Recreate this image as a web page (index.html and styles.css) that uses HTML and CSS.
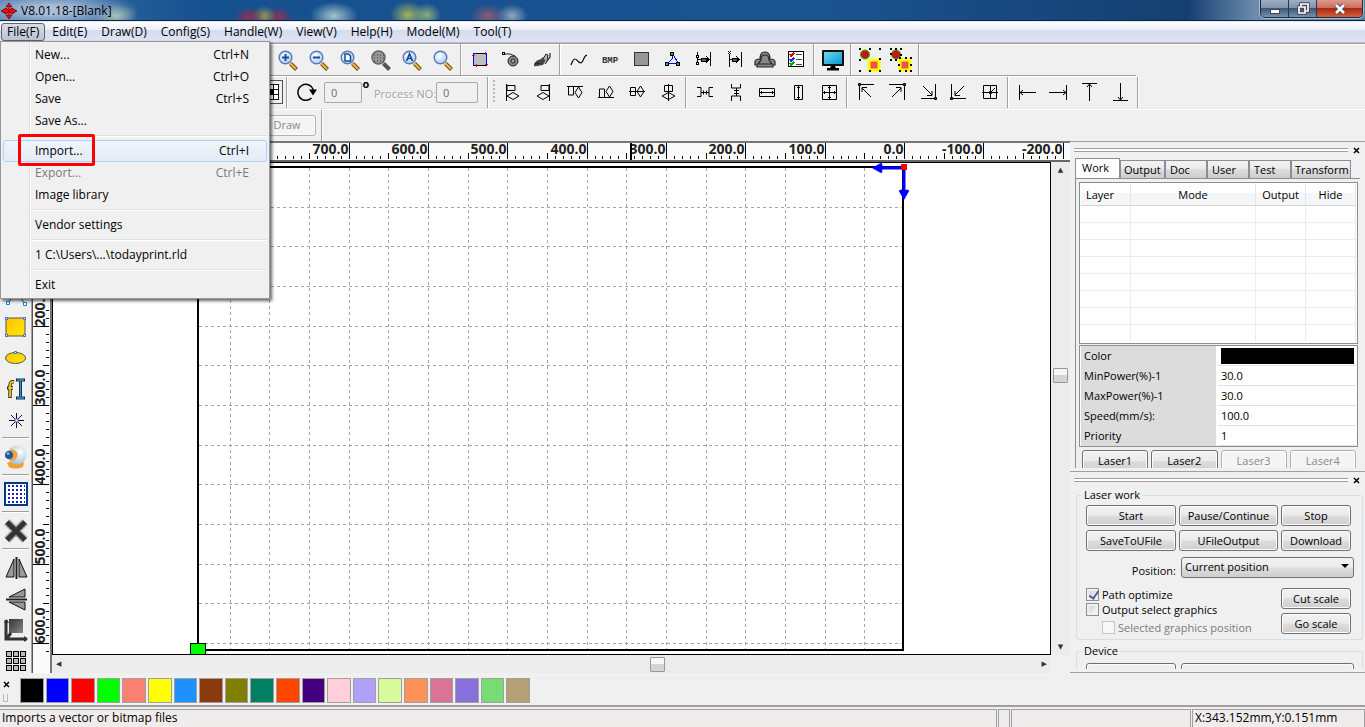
FILE: index.html
```html
<!DOCTYPE html>
<html lang="en">
<head>
    <meta charset="UTF-8">
    <meta name="viewport" content="width=device-width, initial-scale=1.0">
    <title>V8.01.18-[Blank]</title>
    <link rel="stylesheet" href="styles.css">
</head>
<body>
    <!-- shared icon parts -->
    <svg class="defs" width="0" height="0">
        <defs>
            <radialGradient id="glass" cx="40%" cy="35%" r="70%">
                <stop offset="0" stop-color="#ffffff"/>
                <stop offset="1" stop-color="#a9c8f2"/>
            </radialGradient>
            <linearGradient id="gold" x1="0" y1="0" x2="1" y2="1">
                <stop offset="0" stop-color="#ffc400"/>
                <stop offset="1" stop-color="#ffe800"/>
            </linearGradient>
            <linearGradient id="screen" x1="0" y1="0" x2="1" y2="1">
                <stop offset="0" stop-color="#6fd8f4"/>
                <stop offset="1" stop-color="#0898d0"/>
            </linearGradient>
            <radialGradient id="ball" cx="65%" cy="35%" r="70%">
                <stop offset="0" stop-color="#ffffff"/>
                <stop offset="1" stop-color="#a4bcd0"/>
            </radialGradient>
            <linearGradient id="dark" x1="0" y1="0" x2="1" y2="1">
                <stop offset="0" stop-color="#333"/>
                <stop offset="1" stop-color="#888"/>
            </linearGradient>
            <symbol id="lens" viewBox="0 0 24 24">
                <path d="M14.500 15.500l6 6" stroke="#6b4a10" stroke-width="4"/>
                <path d="M14.500 15.500l5.500 5.500" stroke="#e8b83c" stroke-width="2.200"/>
                <circle cx="9.500" cy="9.500" r="6.300" fill="url(#glass)" stroke="#5a78b4" stroke-width="1.400"/>
            </symbol>
        </defs>
    </svg>

    <header class="titlebar">
        <svg class="app-icon" viewBox="0 0 16 16" width="16" height="16"><path d="M8 0l3 4H5zM8 16l3-4H5zM0 8l5-3v6zM16 8l-5-3v6z" fill="#f00" stroke="#300" stroke-width=".6"/><path d="M8 4l4 4-4 4-4-4z" fill="#f00"/><path d="M5 5l6 6M11 5l-6 6" stroke="#500" stroke-width=".6"/></svg>
        <span class="title">V8.01.18-[Blank]</span>
        <div class="window-buttons">
            <button class="win-btn" aria-label="Minimize"><svg width="14" height="12"><rect x="2.500" y="6.500" width="9" height="4" fill="#fff" stroke="#445" /></svg></button>
            <button class="win-btn" aria-label="Restore"><svg width="14" height="14" fill="none"><path d="M5 5V2h7v7H9M3 5h6v6H3z" stroke="#445" stroke-width="3.500"/><path d="M5 4V2h7v7h-2M3 5h6v6H3z" stroke="#fff" stroke-width="1.700"/></svg></button>
            <button class="win-btn win-close" aria-label="Close"><svg width="14" height="12"><path d="M3 2l8 8M11 2l-8 8" stroke="#445" stroke-width="4.500"/><path d="M3 2l8 8M11 2l-8 8" stroke="#fff" stroke-width="2.600"/></svg></button>
        </div>
    </header>

    <nav class="menubar">
        <button class="menu open">File(F)</button>
        <button class="menu">Edit(E)</button>
        <button class="menu">Draw(D)</button>
        <button class="menu">Config(S)</button>
        <button class="menu">Handle(W)</button>
        <button class="menu">View(V)</button>
        <button class="menu">Help(H)</button>
        <button class="menu">Model(M)</button>
        <button class="menu">Tool(T)</button>

        <div class="dropdown">
            <button class="item"><span>New...</span><span>Ctrl+N</span></button>
            <button class="item"><span>Open...</span><span>Ctrl+O</span></button>
            <button class="item"><span>Save</span><span>Ctrl+S</span></button>
            <button class="item"><span>Save As...</span></button>
            <hr>
            <button class="item active"><span>Import...</span><span>Ctrl+I</span></button>
            <button class="item" disabled><span>Export...</span><span>Ctrl+E</span></button>
            <button class="item"><span>Image library</span></button>
            <hr>
            <button class="item"><span>Vendor settings</span></button>
            <hr>
            <button class="item"><span>1 C:\Users\...\todayprint.rld</span></button>
            <hr>
            <button class="item"><span>Exit</span></button>
            <div class="marker"></div>
        </div>
    </nav>

    <div class="toolbar toolbar-main">
        <button class="tool" aria-label="Zoom in"><svg viewBox="0 0 24 24"><use href="#lens"/><path d="M6 9.500h7M9.500 6v7" stroke="#124a9c" stroke-width="2"/></svg></button>
        <button class="tool" aria-label="Zoom out"><svg viewBox="0 0 24 24"><use href="#lens"/><path d="M6 9.500h7" stroke="#124a9c" stroke-width="2"/></svg></button>
        <button class="tool" aria-label="Zoom page"><svg viewBox="0 0 24 24"><use href="#lens"/><path d="M7 6h3.500l2 2v5H7z" fill="#fff" stroke="#124a9c" stroke-width="1.500"/></svg></button>
        <button class="tool" aria-label="Zoom grid"><svg viewBox="0 0 24 24"><path d="M14.500 15.500l6 6" stroke="#555" stroke-width="4"/><circle cx="9.500" cy="9.500" r="6.500" fill="#999" stroke="#666" stroke-width="1.500"/><path d="M5 7h10M5 10h10M5 13h10" stroke="#333" stroke-dasharray="1 2"/></svg></button>
        <button class="tool" aria-label="Zoom all"><svg viewBox="0 0 24 24"><use href="#lens"/><path d="M6.500 13l3-7 3 7M7.500 10.500h4" fill="none" stroke="#124a9c" stroke-width="1.700"/></svg></button>
        <button class="tool" aria-label="Zoom select"><svg viewBox="0 0 24 24"><use href="#lens"/></svg></button>
        <i class="sep"></i>
        <button class="tool" aria-label="Frame"><svg viewBox="0 0 24 24" class="crisp"><rect x="5.500" y="5.500" width="13" height="12" fill="#c0c0c0" stroke="#00f"/><path d="M6 17.500h13M8 5.500h8" stroke="#000"/><path d="M4 7h3M17 4v3M17 16h3M8 16v3" stroke="#f00"/></svg></button>
        <button class="tool" aria-label="Cut property"><svg viewBox="0 0 24 24"><path d="M4 6h7l5 2" fill="none" stroke="#222"/><rect x="3.500" y="4.500" width="2" height="2" fill="#fff" stroke="#000"/><circle cx="14" cy="13" r="5" fill="#888" stroke="#222"/><circle cx="14" cy="13" r="2" fill="#aaa" stroke="#222"/></svg></button>
        <button class="tool" aria-label="Tool"><svg viewBox="0 0 24 24"><path d="M4 18c0-4 3-6 7-7l2-2 3 3-3 5c-4 0-6 2-9 1z" fill="#444"/><path d="M13 11l3-5 2 1-1 5" fill="#bbb" stroke="#222"/><path d="M5 16l5-1M20 5v4l-5 7" fill="none" stroke="#222" stroke-width="1.200"/></svg></button>
        <i class="sep"></i>
        <button class="tool" aria-label="Curve smooth"><svg viewBox="0 0 24 24"><path d="M4 17c1-3 2-6 4-6s3 4 6 4c3-1 2-7 6-8" fill="none" stroke="#000" stroke-width="1.200"/></svg></button>
        <button class="tool" aria-label="BMP"><svg viewBox="0 0 24 24"><text x="12" y="15" class="bmp">BMP</text></svg></button>
        <button class="tool" aria-label="Fill"><svg viewBox="0 0 24 24" class="crisp"><rect x="5.500" y="4.500" width="14" height="13" fill="#969696" stroke="#333"/></svg></button>
        <button class="tool" aria-label="Nodes"><svg viewBox="0 0 24 24" class="crisp"><path d="M12 8v3l-4 4h10L14 8" fill="none" stroke="#00f"/><g fill="#0c3" stroke="#000"><rect x="10.500" y="4.500" width="3" height="3"/><rect x="5.500" y="14.500" width="3" height="3"/><rect x="16.500" y="14.500" width="3" height="3"/></g></svg></button>
        <button class="tool" aria-label="Offset both"><svg viewBox="0 0 24 24" class="crisp" fill="none" stroke="#000"><path d="M6.500 4v13M19.500 4v14M6 11.500h14M15 8l3 3.500-3 3.500"/><rect x="10.500" y="10.500" width="5" height="3" fill="#555"/><g fill="#fff"><rect x="5.500" y="7.500" width="2" height="2"/><rect x="5.500" y="14.500" width="2" height="2"/></g></svg></button>
        <button class="tool" aria-label="Offset one"><svg viewBox="0 0 24 24" class="crisp" fill="none" stroke="#000"><path d="M7.500 6v13M19.500 4v15M6 3l3 3M9 3L6 6M8 11.500h3M14 8l3 3.500-3 3.500"/><rect x="10.500" y="10.500" width="5" height="3" fill="#555"/></svg></button>
        <button class="tool" aria-label="Seal"><svg viewBox="0 0 24 24"><path d="M7 11c0-6 2-7 5-7s5 1 5 7c3 0 5 1 5 3v3h-2v2H4v-2H2v-3c0-2 2-3 5-3z" fill="#888" stroke="#222" stroke-width="1.200"/><path d="M8 12c0-4 1-5 4-5s4 1 4 5l3 4H5z" fill="none" stroke="#222" stroke-width="1.200"/></svg></button>
        <button class="tool" aria-label="Task list"><svg viewBox="0 0 24 24" class="crisp"><rect x="4.500" y="3.500" width="15" height="15" fill="#fff" stroke="#000"/><path d="M12 6.500h6M12 11.500h6M12 16.500h6" stroke="#444"/><path d="M6 6l1 2 3-3" fill="none" stroke="#e00" stroke-width="1.500"/><path d="M6 11l1 2 3-3" fill="none" stroke="#22f" stroke-width="1.500"/><path d="M6 15l1 2 3-3" fill="none" stroke="#0a0" stroke-width="1.500"/></svg></button>
        <i class="sep"></i>
        <button class="tool" aria-label="Preview"><svg viewBox="0 0 24 24"><rect x="1" y="2" width="22" height="16" rx="1" fill="#111"/><rect x="3" y="4" width="18" height="12" fill="url(#screen)"/><path d="M10 18h4l1 2h3v2.500H6V20h3z" fill="#000"/></svg></button>
        <i class="sep"></i>
        <button class="tool" aria-label="Group"><svg viewBox="0 0 24 24"><circle cx="7" cy="6.500" r="4.500" fill="#c81414" stroke="#0c0"/><rect x="11" y="12" width="10" height="10" fill="#f05050" stroke="#ff0" stroke-width="3"/><path d="M1 0h2v2H1zM11 0h2v2h-2zM21 0h2v2h-2zM1 11h2v2H1zM21 10h2v2h-2zM1 22h2v2H1zM11 22h2v2h-2zM21 22h2v2h-2z"/></svg></button>
        <button class="tool" aria-label="Ungroup"><svg viewBox="0 0 24 24"><circle cx="7" cy="6.500" r="4.500" fill="#c81414" stroke="#0c0"/><rect x="11" y="12" width="10" height="10" fill="#f05050" stroke="#ff0" stroke-width="3"/><path d="M1 0h2v2H1zM6 0h2v2H6zM11 0h2v2h-2zM1 5h2v2H1zM11 6h2v2h-2zM1 11h2v2H1zM6 11h2v2H6zM10 9h2v2h-2zM16 9h2v2h-2zM21 9h2v2h-2zM9 16h2v2H9zM21 16h2v2h-2zM10 22h2v2h-2zM16 22h2v2h-2zM21 22h2v2h-2z"/></svg></button>
        <i class="sep"></i>
    </div>

    <div class="toolbar toolbar-align">
        <button class="tool anchor" aria-label="Anchor"><svg viewBox="0 0 24 24" class="crisp"><rect x="3.500" y="3.500" width="17" height="17" fill="#fff" stroke="#000"/><path d="M4 9.500h16M4 14.500h16M9.500 4v16M14.500 4v16" stroke="#000"/><rect x="9" y="9" width="6" height="6"/></svg></button>
        <i class="sep"></i>
        <button class="tool" aria-label="Rotate"><svg viewBox="0 0 24 24"><path d="M19.500 10a8 8 0 1 0-2 8" fill="none" stroke="#000" stroke-width="1.500"/><path d="M15 9.500h8l-4 6z"/></svg></button>
        <input class="box angle" type="text" value="0" aria-label="Angle" disabled>
        <sup class="degree">o</sup>
        <label class="etched" for="process">Process NO:</label>
        <input class="box wide" id="process" type="text" value="0" disabled>
        <i class="sep after-input"></i>
        <i class="grip"></i>
        <button class="tool" aria-label="Align left"><svg viewBox="0 0 24 24" class="line"><path d="M5.500 4v17M6 5.500h8v5H6zM6 16l6-3.500 6 3.500-6 3.500z"/></svg></button>
        <button class="tool" aria-label="Align right"><svg viewBox="0 0 24 24" class="line"><path d="M17.500 4v17M17 5.500H9v5h8zM17 16l-6-3.500L5 16l6 3.500z"/></svg></button>
        <button class="tool" aria-label="Align top"><svg viewBox="0 0 24 24" class="line"><path d="M4 6.500h16M5.500 7v8h5V7M15.500 7l3.500 5.500-3.500 5.500-3.500-5.500z"/></svg></button>
        <button class="tool" aria-label="Align bottom"><svg viewBox="0 0 24 24" class="line"><path d="M4 17.500h16M5.500 17V9h5v8M15.500 6l3.500 5.500-3.500 5.500-3.500-5.500z"/></svg></button>
        <button class="tool" aria-label="Align middle"><svg viewBox="0 0 24 24" class="line"><path d="M4 11.500h16M5.500 7.500h5v8h-5zM15.500 6l3.500 5.500-3.500 5.500-3.500-5.500z"/></svg></button>
        <button class="tool" aria-label="Align center"><svg viewBox="0 0 24 24" class="line"><path d="M12.500 4v17M8.500 5.500h8v6h-8zM6 16l6.500-3.500L19 16l-6.500 3.500z"/></svg></button>
        <i class="sep"></i>
        <button class="tool" aria-label="Space across"><svg viewBox="0 0 24 24" class="line"><path d="M4 7.500h4v9H4M20 7.500h-4v9h4M8 12.500h8M10.500 10.500v4M13.500 10.500v4"/></svg></button>
        <button class="tool" aria-label="Space down"><svg viewBox="0 0 24 24" class="line"><path d="M7.500 4v4h9V4M7.500 21v-5h9v5M12.500 8v8M10 10.500h5M10 13.500h5"/></svg></button>
        <button class="tool" aria-label="Same width"><svg viewBox="0 0 24 24" class="line"><path d="M4.500 8.500h15v8h-15zM4 12.500h16M6.500 11v3M17.500 11v3"/></svg></button>
        <button class="tool" aria-label="Same height"><svg viewBox="0 0 24 24" class="line"><path d="M8.500 5.500h8v14h-8zM12.500 5v15M11 7.500h3M11 17.500h3"/></svg></button>
        <button class="tool" aria-label="Same size"><svg viewBox="0 0 24 24" class="line"><path d="M5.500 5.500h14v14h-14zM12.500 5v15M5 12.500h15M11 7.500h3M11 17.500h3M7.500 11v3M17.500 11v3"/></svg></button>
        <i class="sep"></i>
        <button class="tool" aria-label="Top left"><svg viewBox="0 0 24 24" class="line"><path d="M5.500 20V4.500H20M17 17L8 8M8 12V7.500h5"/><path d="M4.500 3.500h2v2h-2z"/></svg></button>
        <button class="tool" aria-label="Top right"><svg viewBox="0 0 24 24" class="line"><path d="M4 4.500h15.500V20M7 17l9-9M16 12V7.500h-5"/><path d="M18.500 3.500h2v2h-2z"/></svg></button>
        <button class="tool" aria-label="Bottom right"><svg viewBox="0 0 24 24" class="line"><path d="M5 18.500h14.500V4M7 6l9 9M16 11v4.500h-5"/><path d="M18.500 17.500h2v2h-2z"/></svg></button>
        <button class="tool" aria-label="Bottom left"><svg viewBox="0 0 24 24" class="line"><path d="M4.500 4v14.500H19M17 6l-9 9M8 11v4.500h5"/><path d="M3.500 17.500h2v2h-2z"/></svg></button>
        <button class="tool" aria-label="Center of page"><svg viewBox="0 0 24 24" class="line"><path d="M5.500 5.500h13v13h-13zM12.500 5v14M4 12.500h16M17 8l-4 4"/><path d="M11.500 11.500h2v2h-2z"/></svg></button>
        <i class="sep"></i>
        <button class="tool" aria-label="To left"><svg viewBox="0 0 24 24" class="line"><path d="M4.500 5v15M5 12.500h16M8 10l-3 2.500L8 15"/></svg></button>
        <button class="tool" aria-label="To right"><svg viewBox="0 0 24 24" class="line"><path d="M20.500 5v15M20 12.500H3M17 10l3 2.500-3 2.500"/></svg></button>
        <button class="tool" aria-label="To top"><svg viewBox="0 0 24 24" class="line"><path d="M5 3.500h15M12.500 4v17M10 7l2.500-3L15 7"/></svg></button>
        <button class="tool" aria-label="To bottom"><svg viewBox="0 0 24 24" class="line"><path d="M5 20.500h15M12.500 20V3M10 17l2.500 3 2.500-3"/></svg></button>
        <i class="sep"></i>
    </div>

    <div class="toolbar toolbar-draw">
        <button class="push draw-btn" disabled>Draw</button>
        <i class="sep"></i>
    </div>

    <main class="work">
        <aside class="side">
            <button class="tool" aria-label="Polyline"><svg viewBox="0 0 24 24"><path d="M4 19L12 8l9 12" fill="none" stroke="#555"/><path d="M2.500 17.500h3v3h-3zM19.500 18.500h3v3h-3z" fill="#fff" stroke="#08c"/></svg></button>
            <button class="tool" aria-label="Rectangle"><svg viewBox="0 0 24 24"><rect x="2" y="3" width="19" height="18" fill="url(#gold)" stroke="#555"/><path d="M1.500 2.500h2v2h-2zM19.500 2.500h2v2h-2zM1.500 19.500h2v2h-2zM19.500 19.500h2v2h-2z" fill="#fff" stroke="#46c"/></svg></button>
            <button class="tool" aria-label="Ellipse"><svg viewBox="0 0 24 24"><ellipse cx="11.500" cy="12" rx="10" ry="5.500" fill="url(#gold)" stroke="#555"/><path d="M10.500 5.500h2v2h-2z" fill="#fff" stroke="#08c"/></svg></button>
            <button class="tool" aria-label="Text"><svg viewBox="0 0 24 24"><path d="M10 5c-3-1-4 1-4 4v12M3 11h6" fill="none" stroke="#333" stroke-width="3.500"/><path d="M10 5c-3-1-4 1-4 4v11M4 11h5" fill="none" stroke="#fd0" stroke-width="1.600"/><path d="M12 3h9M16.500 3v18M12 21h9" stroke="#223" stroke-width="3"/><path d="M13 3h7M16.500 3v18M13 21h7" stroke="#29d" stroke-width="1.300"/></svg></button>
            <button class="tool" aria-label="Point"><svg viewBox="0 0 24 24"><path d="M12.500 5v15M5 12.500h15M7 7l11 11M18 7L7 18" stroke="#111"/><rect x="11" y="11" width="3" height="3" fill="#fff" stroke="#46c"/></svg></button>
            <i class="rule"></i>
            <button class="tool" aria-label="Camera"><svg viewBox="0 0 24 24"><path d="M3 18c6-3 12-3 17 0l-1 4c-5 2-10 2-14 0z" fill="#f0a030"/><circle cx="13" cy="10" r="9.500" fill="url(#ball)"/><circle cx="8" cy="10" r="5.500" fill="#f0a040"/><circle cx="5" cy="10" r="4" fill="#1a5a90"/><circle cx="4" cy="8.500" r="1.500" fill="#6bd"/></svg></button>
            <i class="rule"></i>
            <button class="tool" aria-label="Array"><svg viewBox="0 0 24 24"><rect x="1" y="1" width="22" height="22" fill="#fff" stroke="#003c82" stroke-width="2"/><path d="M4 4h17M4 8h17M4 12h17M4 16h17M4 20h17" stroke="#22b" stroke-width="2" stroke-dasharray="2 2"/></svg></button>
            <i class="rule"></i>
            <button class="tool" aria-label="Delete"><svg viewBox="0 0 24 24"><path d="M3 3l18 18M21 3L3 21" stroke="#aaa" stroke-width="8"/><path d="M3 3l18 18M21 3L3 21" stroke="#333" stroke-width="5"/></svg></button>
            <i class="rule"></i>
            <button class="tool" aria-label="Mirror across"><svg viewBox="0 0 24 24"><path d="M10 3v18H2zM15 3v18h8z" fill="#999" stroke="#111"/><path d="M12.500 1v22" stroke="#222" stroke-width="2"/></svg></button>
            <button class="tool" aria-label="Mirror down"><svg viewBox="0 0 24 24"><path d="M21 2v8H5zM21 15v8L5 15z" fill="#999" stroke="#111"/><path d="M2 12.500h21" stroke="#222" stroke-width="2"/></svg></button>
            <button class="tool" aria-label="Origin"><svg viewBox="0 0 24 24"><rect x="5" y="1" width="14" height="14" fill="url(#dark)"/><path d="M2 2v19h21M3 20l4-5" fill="none" stroke="#333" stroke-width="3"/><path d="M0 5l2.500-4L5 5zM20 18l4 3-4 3z" fill="#333"/></svg></button>
            <button class="tool" aria-label="Grid"><svg viewBox="0 0 24 24" class="crisp"><path d="M2.500 2.500h5v5h-5zM9.500 2.500h5v5h-5zM16.500 2.500h5v5h-5zM2.500 9.500h5v5h-5zM9.500 9.500h5v5h-5zM16.500 9.500h5v5h-5zM2.500 16.500h5v5h-5zM9.500 16.500h5v5h-5zM16.500 16.500h5v5h-5z" fill="#bbb" stroke="#000"/></svg></button>
        </aside>

        <section class="editor">
            <svg class="ruler ruler-top" id="rulerTop"></svg>
            <svg class="ruler ruler-left" id="rulerLeft"></svg>
            <svg class="canvas" id="canvas"></svg>
            <div class="scroll scroll-y"><span>&#9650;</span><i class="thumb"></i><span>&#9660;</span></div>
            <div class="scroll scroll-x"><span>&#9664;</span><i class="thumb"></i><span>&#9654;</span></div>
        </section>

        <aside class="docks">
            <section class="dock dock-work">
                <div class="dock-head"><i></i><button class="close" aria-label="Close"><svg width="7" height="7"><path d="M1 1l5 5M6 1L1 6" stroke="#000" stroke-width="1.500"/></svg></button></div>
                <div class="tabs">
                    <button class="tab selected">Work</button>
                    <button class="tab">Output</button>
                    <button class="tab">Doc</button>
                    <button class="tab">User</button>
                    <button class="tab">Test</button>
                    <button class="tab long">Transform</button>
                </div>
                <div class="page">
                    <table class="layers">
                        <colgroup><col class="c-layer"><col><col class="c-out"><col class="c-out"></colgroup>
                        <thead><tr><th>Layer</th><th>Mode</th><th>Output</th><th>Hide</th></tr></thead>
                        <tbody>
                            <tr><td></td><td></td><td></td><td></td></tr>
                            <tr><td></td><td></td><td></td><td></td></tr>
                            <tr><td></td><td></td><td></td><td></td></tr>
                            <tr><td></td><td></td><td></td><td></td></tr>
                            <tr><td></td><td></td><td></td><td></td></tr>
                            <tr><td></td><td></td><td></td><td></td></tr>
                            <tr><td></td><td></td><td></td><td></td></tr>
                            <tr><td></td><td></td><td></td><td></td></tr>
                        </tbody>
                    </table>
                    <table class="props">
                        <tr><th>Color</th><td><div class="color"></div></td></tr>
                        <tr><th>MinPower(%)-1</th><td>30.0</td></tr>
                        <tr><th>MaxPower(%)-1</th><td>30.0</td></tr>
                        <tr><th>Speed(mm/s):</th><td>100.0</td></tr>
                        <tr><th>Priority</th><td>1</td></tr>
                    </table>
                    <div class="lasers">
                        <button class="push">Laser1</button>
                        <button class="push">Laser2</button>
                        <button class="push" disabled>Laser3</button>
                        <button class="push" disabled>Laser4</button>
                    </div>
                </div>
            </section>

            <section class="dock dock-laser">
                <div class="dock-head"><i></i><button class="close" aria-label="Close"><svg width="7" height="7"><path d="M1 1l5 5M6 1L1 6" stroke="#000" stroke-width="1.500"/></svg></button></div>
                <fieldset class="group">
                    <legend>Laser work</legend>
                    <div class="buttons">
                        <button class="push">Start</button>
                        <button class="push">Pause/Continue</button>
                        <button class="push">Stop</button>
                        <button class="push">SaveToUFile</button>
                        <button class="push">UFileOutput</button>
                        <button class="push">Download</button>
                    </div>
                    <div class="position">
                        <label for="position">Position:</label>
                        <select id="position"><option>Current position</option></select>
                    </div>
                    <div class="options">
                        <div class="checks">
                            <label><input type="checkbox" checked>Path optimize</label>
                            <label><input type="checkbox">Output select graphics</label>
                            <label class="sub"><input type="checkbox" disabled>Selected graphics position</label>
                        </div>
                        <div class="scales">
                            <button class="push">Cut scale</button>
                            <button class="push">Go scale</button>
                        </div>
                    </div>
                </fieldset>
                <fieldset class="group device">
                    <legend>Device</legend>
                    <div class="device-row">
                        <button class="push" aria-label="Setting"></button>
                        <button class="push" aria-label="Device port"></button>
                    </div>
                </fieldset>
            </section>
        </aside>
    </main>

    <div class="palette">
        <div class="palette-head">
            <button class="close" aria-label="Close"><svg width="7" height="7"><path d="M1 1l5 5M6 1L1 6" stroke="#000" stroke-width="1.500"/></svg></button>
            <i></i>
        </div>
        <div class="swatches" id="swatches"></div>
    </div>

    <footer class="status">
        <span class="hint">Imports a vector or bitmap files</span>
        <span class="blank"></span>
        <span class="info"></span>
        <span class="coords">X:343.152mm,Y:0.151mm</span>
    </footer>

    <script src="script.js"></script>
</body>
</html>
```

FILE: styles.css
```css
* {
    box-sizing: border-box;
}
body {
    margin: 0;
    height: 100vh;
    display: flex;
    flex-direction: column;
    overflow: hidden;
    background-color: #f0f0f0;
    color: #000;
    font-family: "Open Sans", "Noto Sans", sans-serif;
    font-size: 11px;
    line-height: 16px;
}
button, input, select {
    font: inherit;
    color: inherit;
    margin: 0;
    padding: 0;
}
button {
    border: none;
    background: none;
}
.defs {
    position: absolute;
}
.crisp {
    shape-rendering: crispEdges;
}
.line {
    fill: none;
    stroke: #000;
}

/* title bar */
.titlebar {
    flex: none;
    height: 22px;
    display: flex;
    align-items: center;
    background:
        radial-gradient(ellipse 90px 20px at 50px 10px, #a9bfd8 20%, transparent 100%),
        radial-gradient(ellipse 22px 12px at 116px 16px, #a9c2a8, transparent),
        radial-gradient(ellipse 16px 10px at 249px 17px, #8d3050, transparent),
        radial-gradient(ellipse 12px 10px at 264px 16px, #9a9750, transparent),
        radial-gradient(ellipse 14px 10px at 279px 17px, #8d3050, transparent),
        radial-gradient(ellipse 24px 14px at 334px 16px, #a5c4c8, transparent),
        radial-gradient(ellipse 18px 14px at 408px 15px, #a3b45c, transparent),
        radial-gradient(ellipse 14px 12px at 427px 15px, #8cae80, transparent),
        radial-gradient(ellipse 18px 12px at 488px 16px, #8a5c72, transparent),
        radial-gradient(ellipse 16px 12px at 512px 16px, #8fa8b8, transparent),
        linear-gradient(90deg, #3f72a8 0, #15508f 15%, #1b5390 60%, #153f70 87%, #6d8cae 92%, #5f7f9f 100%);
    border-bottom: 1px solid #dfe6f2;
    box-shadow: inset 0 -1px #0c2748;
}
.app-icon {
    margin-left: 1px;
}
.title {
    margin-left: 4px;
    flex: 1;
    font-size: 12px;
}
.window-buttons {
    align-self: flex-start;
    display: flex;
    height: 18px;
    margin-right: 2px;
    border: 1px solid #1c2c40;
    border-top: none;
    border-radius: 0 0 5px 5px;
    box-shadow: 0 0 0 1px #a9bccf;
    overflow: hidden;
}
.win-btn {
    width: 28px;
    display: flex;
    align-items: center;
    justify-content: center;
    border-right: 1px solid #26384e;
    background: linear-gradient(#9fb0c4 0, #8094ad 45%, #3d5778 50%, #7892ac 100%);
}
.win-close {
    width: 45px;
    border-right: none;
    background: linear-gradient(#dc9a8c 0, #cc6f5c 45%, #ad2812 50%, #d2603c 100%);
}

/* menu bar */
.menubar {
    position: relative;
    flex: none;
    height: 21px;
    display: flex;
    padding: 1px;
    background: linear-gradient(#fdfdff 0, #eceff8 38%, #d5dcee 42%, #dfe5f6 100%);
    border-bottom: 1px solid #b6bccc;
    font-size: 12px;
}
.menu {
    height: 18px;
    padding: 0 6px;
    border: 1px solid transparent;
    border-radius: 3px;
    line-height: 16px;
}
.menu.open {
    padding: 0 5px;
    border-color: #5c6470;
    background: linear-gradient(#d8dbe4, #bcc3d3);
}
.dropdown {
    position: absolute;
    z-index: 5;
    top: 19px;
    left: 0;
    width: 270px;
    padding: 2px;
    border: 1px solid #979797;
    background: linear-gradient(90deg, #f0f0f0 28px, #e0e0e0 28px, #e0e0e0 29px, #fff 29px, #fff 30px, #f0f0f0 30px);
    box-shadow: 2px 2px 3px rgba(0, 0, 0, 0.6);
}
.item {
    display: flex;
    justify-content: space-between;
    align-items: center;
    width: 100%;
    height: 22px;
    padding: 0 17px 0 31px;
    border: 1px solid transparent;
    border-radius: 3px;
}
.item.active {
    border-color: #aecff7;
    background: linear-gradient(#f1f4fa, #e4ecf8);
}
.item:disabled {
    color: #7a7a7a;
}
.dropdown hr {
    height: 2px;
    margin: 3px 0 3px 28px;
    border: none;
    border-top: 1px solid #e0e0e0;
    border-bottom: 1px solid #fff;
}
.marker {
    position: absolute;
    top: 92px;
    left: 17px;
    width: 77px;
    height: 32px;
    border: 3px solid #f00;
    border-radius: 2px;
}

/* toolbars */
.toolbar {
    flex: none;
    height: 33px;
    display: flex;
    align-items: center;
    padding-left: 272px;
    border-top: 1px solid #a0a0a0;
    box-shadow: inset 0 1px #fff;
}
.toolbar-main {
    height: 32px;
}
.tool {
    flex: none;
    width: 31px;
    height: 31px;
    display: flex;
    align-items: center;
    justify-content: center;
}
.tool svg {
    width: 24px;
    height: 24px;
}
.bmp {
    font: bold 9px "Liberation Mono", monospace;
    text-anchor: middle;
    fill: #333;
}
.sep {
    flex: none;
    width: 2px;
    height: 31px;
    margin: 0 2px;
    border-left: 1px solid #a0a0a0;
    border-right: 1px solid #fff;
}
.toolbar-align {
    width: 1136px;
    padding-left: 257px;
}
.toolbar-align .anchor {
    width: 27px;
}
.toolbar-align .anchor svg {
    border: 1px solid #555;
}
.box {
    flex: none;
    width: 38px;
    height: 21px;
    padding: 0 6px;
    border: 1px solid #a9a9a9;
    border-radius: 2px;
    background-color: #f0f0f0;
    color: #6d6d6d;
}
.box.angle {
    margin-left: 3px;
}
.box.wide {
    width: 42px;
    margin-left: 2px;
}
.degree {
    align-self: flex-start;
    flex: none;
    width: 8px;
    text-align: center;
    font-size: 11px;
    font-weight: bold;
}
.etched {
    flex: none;
    width: 60px;
    margin: 4px 0 0 4px;
    color: #a0a0a0;
    text-shadow: 1px 1px #fff;
    white-space: nowrap;
}
.after-input {
    margin-left: 9px;
}
.grip {
    flex: none;
    width: 2px;
    height: 24px;
    margin: 0 2px;
    background: repeating-linear-gradient(#b8b8b8 0, #b8b8b8 2px, transparent 2px, transparent 4px);
}
.toolbar-draw {
    padding-left: 258px;
    border-top-color: #e6e6e6;
}
.draw-btn {
    width: 58px;
    height: 21px;
    margin-right: 3px;
}
.push {
    border: 1px solid #707070;
    border-radius: 3px;
    background: linear-gradient(#f2f2f2 0, #ebebeb 48%, #dddddd 52%, #cfcfcf 100%);
    box-shadow: inset 0 0 0 1px #fcfcfc;
    line-height: 18px;
}
.push:disabled {
    border-color: #adb2b5;
    background: #f4f4f4;
    color: #8a8a8a;
}

/* main area */
.work {
    flex: 1;
    min-height: 0;
    display: flex;
}
.side {
    flex: none;
    width: 32px;
    padding-top: 139px;
    overflow: hidden;
    border-right: 1px solid #a0a0a0;
}
.rule {
    display: block;
    height: 2px;
    margin: 2px;
    border-top: 1px solid #a0a0a0;
    border-bottom: 1px solid #fff;
}
.editor {
    flex: 1;
    min-width: 0;
    display: grid;
    grid-template-columns: 20px 1fr 19px;
    grid-template-rows: 21px 1fr 18px;
}
.ruler {
    width: 100%;
    height: 100%;
    background-color: #fafafa;
    font: bold 14px "Open Sans", "Noto Sans", sans-serif;
    fill: #222;
    shape-rendering: crispEdges;
}
.ruler-top {
    grid-column: 1 / 4;
    border-top: 2px solid #777;
    border-bottom: 2px solid #666;
}
.ruler-left {
    grid-row: 2 / 4;
    border-left: 1px solid #555;
    border-right: 2px solid #777;
}
.canvas {
    width: 100%;
    height: 100%;
    background-color: #fff;
    border: 1px solid #000;
}
.grid-line {
    stroke: #a8a898;
    stroke-dasharray: 3 3;
    shape-rendering: crispEdges;
}
.scroll {
    display: flex;
    align-items: center;
    justify-content: space-between;
    background-color: #ececec;
    color: #333;
    font: 7px/16px "DejaVu Sans", sans-serif;
}
.scroll-y {
    flex-direction: column;
}
.scroll-x {
    grid-column: 2 / 3;
    padding: 0 4px;
}
.scroll-y .thumb {
    margin-bottom: 66px;
}
.thumb {
    width: 15px;
    height: 15px;
    border: 1px solid #979797;
    border-radius: 1px;
    background: linear-gradient(#f6f6f6 45%, #d4d4d4 50%);
}
.scroll-x .thumb {
    margin-left: 212px;
}

/* docked panels */
.docks {
    flex: none;
    width: 295px;
    display: flex;
    flex-direction: column;
    border-bottom: 1px solid #a0a0a0;
}
.dock {
    overflow: hidden;
    border-top: 1px solid #a0a0a0;
    border-bottom: 3px solid #f0f0f0;
}
.dock-work {
    flex: none;
    height: 330px;
}
.dock-laser {
    flex: 1;
}
.dock-head {
    display: flex;
    align-items: center;
    height: 16px;
    padding: 0 5px 0 4px;
}
.dock-head i {
    flex: 1;
    height: 4px;
    border-top: 1px solid #a0a0a0;
    border-bottom: 1px solid #a0a0a0;
    background-color: #fff;
}
.close {
    display: flex;
    margin-left: 5px;
}
.tabs {
    display: flex;
    align-items: flex-end;
    padding-left: 5px;
}
.tab {
    width: 42px;
    height: 18px;
    padding-left: 4px;
    border: 1px solid #8c8e97;
    border-bottom: none;
    background: linear-gradient(#f2f2f2 0, #ebebeb 45%, #dcdcdc 50%, #cdcdcd 100%);
    text-align: left;
}
.tab.selected {
    width: 45px;
    height: 20px;
    padding: 0 0 2px 6px;
    background: #fff;
}
.tab.selected + .tab {
    width: 45px;
    padding-left: 3px;
}
.tab.long {
    width: 60px;
    padding-left: 3px;
}
.page {
    margin: 0 5px;
    padding: 3px 2px 0 3px;
    border-top: 1px solid #8c8e97;
    border-left: 1px solid #8c8e97;
}
.layers, .props {
    width: 100%;
    table-layout: fixed;
    border: 1px solid #8c8e97;
    border-spacing: 0;
    background-color: #fff;
}
.layers {
    height: 162px;
    padding: 1px;
}
.c-layer, .c-out {
    width: 50px;
}
.layers th {
    height: 22px;
    padding: 0;
    font-weight: normal;
    border-right: 1px solid #e3e5ea;
    border-bottom: 1px solid #d5d5d5;
    background: linear-gradient(#fff 40%, #f5f6f8 45%);
}
.layers th:first-child {
    text-align: left;
    padding-left: 5px;
}
.layers td {
    height: 17px;
    padding: 0;
    border-right: 1px solid #ececec;
    border-bottom: 1px solid #ececec;
}
.layers tr:last-child td {
    border-bottom: none;
}
.props {
    margin-top: 1px;
    padding: 0 1px;
}
.props th {
    width: 135px;
    height: 20px;
    padding: 0 0 0 3px;
    font-weight: normal;
    text-align: left;
    background-color: #dcdcdc;
}
.props td {
    padding: 0 2px;
    border-left: 3px solid #fff;
    border-bottom: 1px solid #e0e0e0;
}
.color {
    height: 16px;
    background-color: #000;
}
.lasers {
    display: flex;
    gap: 3px;
    margin: 3px 2px 0 3px;
}
.lasers .push {
    flex: 1;
    height: 22px;
}
.group {
    margin: 0 2px 0 6px;
    min-width: 0;
    padding: 0 8px 4px 9px;
    border: 1px solid #d5dfe5;
    border-radius: 3px;
}
.group legend {
    margin-left: -4px;
    padding: 0 2px;
    line-height: 14px;
}
.buttons {
    display: grid;
    grid-template-columns: 90fr 99fr 70fr;
    gap: 4px 3px;
    margin: 3px 3px 0 0;
}
.buttons .push, .scales .push {
    height: 21px;
}
.position {
    position: relative;
    display: flex;
    justify-content: flex-end;
    align-items: center;
    gap: 5px;
    margin-top: 4px;
}
.position label {
    padding-top: 8px;
}
.position select {
    width: 173px;
    height: 21px;
    padding: 0 3px;
    border: 1px solid #707070;
    border-radius: 3px;
    appearance: none;
    background: linear-gradient(#f2f2f2 0, #ebebeb 48%, #dddddd 52%, #cfcfcf 100%);
}
.position::after {
    content: "";
    position: absolute;
    right: 5px;
    top: 9px;
    border: 4px solid transparent;
    border-top-color: #000;
    border-bottom: none;
}
.options {
    display: flex;
    justify-content: space-between;
    margin: 8px 3px 0 0;
}
.checks label {
    display: flex;
    align-items: center;
    height: 15px;
    gap: 3px;
    white-space: nowrap;
}
.checks .sub {
    margin: 3px 0 0 16px;
    color: #7a7a7a;
}
.checks input {
    appearance: none;
    width: 13px;
    height: 13px;
    border: 1px solid #8e8f8f;
    background: linear-gradient(135deg, #cfd3d8, #f6f6f6) content-box #f4f4f4;
    padding: 2px;
}
.checks input:checked {
    position: relative;
}
.checks input:checked::after {
    content: "";
    position: absolute;
    left: 4px;
    top: 0;
    width: 4px;
    height: 8px;
    border: solid #4b5f9c;
    border-width: 0 2px 2px 0;
    transform: rotate(35deg);
}
.checks input:disabled {
    border-color: #c5c5c5;
    background: #f8f8f8;
}
.scales {
    display: flex;
    flex-direction: column;
    gap: 4px;
    width: 70px;
    padding-top: 1px;
}
.device {
    margin-top: 4px;
    padding-bottom: 30px;
}
.device-row {
    display: grid;
    grid-template-columns: 90fr 173fr;
    gap: 5px;
    margin-top: 5px;
}
.device-row .push {
    height: 21px;
}

/* colour palette */
.palette {
    flex: none;
    height: 33px;
    display: flex;
    align-items: flex-start;
    padding-top: 5px;
    border-bottom: 1px solid #a0a0a0;
}
.palette-head {
    width: 20px;
    padding: 3px 3px 0 3px;
}
.palette-head .close {
    margin-left: 0;
}
.palette-head i {
    display: block;
    width: 5px;
    height: 8px;
    margin-top: 6px;
    border: 1px solid #bbb;
    border-top: none;
}
.swatches {
    display: grid;
    grid-template-columns: repeat(20, 1fr);
    gap: 2px;
    width: 510px;
}
.swatch {
    height: 25px;
    border: 1px solid #a0a0a0;
}

/* status bar */
.status {
    flex: none;
    height: 21px;
    display: flex;
    gap: 2px;
    padding-top: 2px;
    border-top: 1px solid #a0a0a0;
    font-size: 12px;
}
.status span {
    height: 18px;
    padding-left: 2px;
    border: 1px solid #a0a0a0;
    border-bottom: none;
    border-left: none;
    background-color: #f0ecec;
    box-shadow: -1px 0 #a0a0a0;
    white-space: nowrap;
}
.status .hint {
    flex: 1;
}
.status .blank {
    width: 11px;
}
.status .info {
    width: 179px;
}
.status .coords {
    width: 172px;
}
```

FILE: script.js
```js
const SVG = 'http://www.w3.org/2000/svg';
const STEP = 79.35; // pixels per 100mm

function add(parent, name, attrs, text) {
    const el = document.createElementNS(SVG, name);
    for (const key in attrs) el.setAttribute(key, attrs[key]);
    if (text) el.textContent = text;
    parent.appendChild(el);
    return el;
}

function line(parent, x1, y1, x2, y2, attrs) {
    return add(parent, 'line', Object.assign({ x1, y1, x2, y2, stroke: '#000' }, attrs));
}

// Horizontal ruler, zero on the right
const rulerTop = document.getElementById('rulerTop');
const zeroX = 872;
for (let i = -20; i <= 79; i++) {
    const x = Math.round(zeroX - i * STEP / 10) + 0.5;
    const len = i % 10 === 0 ? 16 : i % 5 === 0 ? 6 : 3;
    line(rulerTop, x, 16 - len, x, 16);
    if (i % 10 === 0) {
        add(rulerTop, 'text', { x: x - 1, y: 11, 'text-anchor': 'end' }, (i * 10).toFixed(1));
    }
}
line(rulerTop, 599, 0, 599, 17, { 'stroke-width': 2 });

// Vertical ruler
const rulerLeft = document.getElementById('rulerLeft');
const zeroY = 5;
for (let i = 18; i <= 61; i++) {
    const y = Math.round(zeroY + i * STEP / 10) + 0.5;
    const len = i % 10 === 0 ? 16 : i % 5 === 0 ? 6 : 3;
    line(rulerLeft, 16 - len, y, 16, y);
    if (i % 10 === 0) {
        add(rulerLeft, 'text', { transform: `translate(12 ${y}) rotate(-90)` }, (i * 10).toFixed(1));
    }
}

// Work area with its grid
const canvas = document.getElementById('canvas');
for (let i = 1; i <= 17; i++) {
    const x = Math.round(851 - i * STEP / 2) + 0.5;
    line(canvas, x, 5, x, 489, { class: 'grid-line' });
}
for (let i = 1; i <= 12; i++) {
    const y = Math.round(4 + i * STEP / 2) + 0.5;
    line(canvas, 146, y, 850, y, { class: 'grid-line' });
}
add(canvas, 'rect', { x: 145, y: 4, width: 705, height: 483, fill: 'none', stroke: '#000', 'stroke-width': 2 });
add(canvas, 'rect', { x: 137.5, y: 480.5, width: 15, height: 14, fill: '#0f0', stroke: '#000' });

// Origin arrows
add(canvas, 'path', { d: 'M851 5H824M851 5v26', stroke: '#00f', 'stroke-width': 3, fill: 'none' });
add(canvas, 'path', { d: 'M829 1l-7 4 7 4M847 27l4 7 4-7', stroke: '#00f', 'stroke-width': 3, fill: '#00f' });
add(canvas, 'rect', { x: 848, y: 1, width: 6, height: 6, fill: '#f00' });

const colors = [
    '#000000', '#0000ff', '#ff0000', '#00ff00', '#fa8072', '#ffff00', '#1e90ff', '#8b3a10', '#808000', '#008060',
    '#ff4500', '#44007f', '#ffd0dc', '#b0a0f8', '#d8fa9a', '#ff9058', '#db7396', '#8870dc', '#78dc74', '#b4a074'
];
const swatches = document.getElementById('swatches');
colors.forEach(color => {
    const el = document.createElement('button');
    el.className = 'swatch';
    el.style.backgroundColor = color;
    el.setAttribute('aria-label', color);
    swatches.appendChild(el);
});
```
